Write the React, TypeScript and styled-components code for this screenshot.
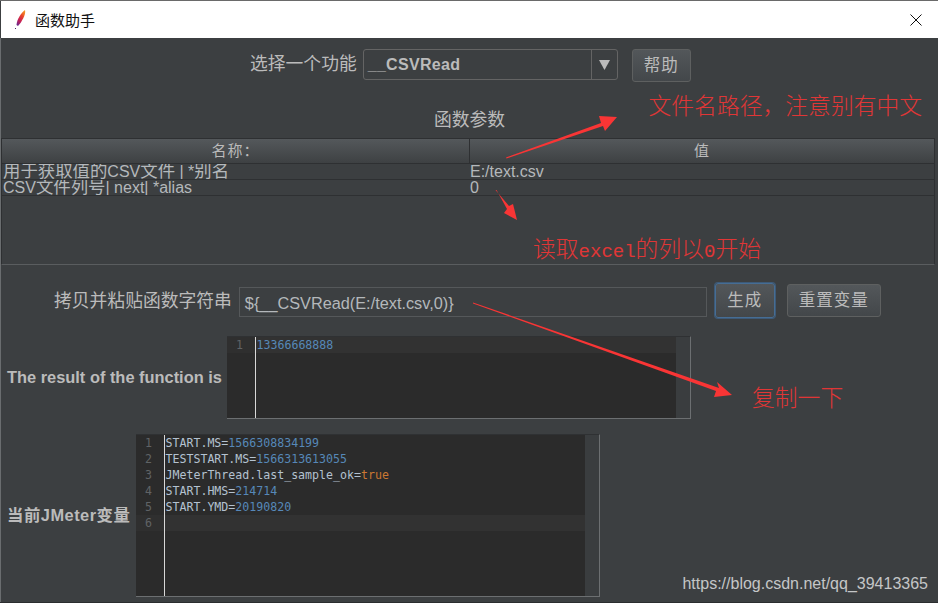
import React from 'react';
import styled, { createGlobalStyle } from 'styled-components';

type Token = { text: string; kind?: 'num' | 'bool' };
type Line = Token[];

const resultLines: Line[] = [[{ text: '13366668888', kind: 'num' }]];

const variableLines: Line[] = [
  [{ text: 'START.MS=' }, { text: '1566308834199', kind: 'num' }],
  [{ text: 'TESTSTART.MS=' }, { text: '1566313613055', kind: 'num' }],
  [{ text: 'JMeterThread.last_sample_ok=' }, { text: 'true', kind: 'bool' }],
  [{ text: 'START.HMS=' }, { text: '214714', kind: 'num' }],
  [{ text: 'START.YMD=' }, { text: '20190820', kind: 'num' }],
  [],
];

const params = [
  { name: '用于获取值的CSV文件 | *别名', value: 'E:/text.csv' },
  { name: 'CSV文件列号| next| *alias', value: '0' },
];

// the table font draws chinese a bit larger than latin
function MixedText({ text }: { text: string }) {
  const parts = text.split(/([\u4e00-\u9fff]+)/);
  return (
    <>
      {parts.map((part, i) => (i % 2 === 1 ? <CjkRun key={i}>{part}</CjkRun> : part))}
    </>
  );
}

function Editor({ lines, activeLine, width, height }: { lines: Line[]; activeLine: number; width: number; height: number }) {
  return (
    <EditorBox $width={width} $height={height}>
      <EditorMain>
        <Gutter>
          {lines.map((_, i) => (
            <GutterNumber key={i} $active={i === activeLine}>{i + 1}</GutterNumber>
          ))}
        </Gutter>
        <Code>
          {lines.map((line, i) => (
            <CodeLine key={i} $active={i === activeLine}>
              {line.map((t, j) => (
                <Tok key={j} $kind={t.kind}>{t.text}</Tok>
              ))}
            </CodeLine>
          ))}
        </Code>
      </EditorMain>
      <ScrollTrack />
    </EditorBox>
  );
}

function App() {
  return (
    <Window>
      <GlobalStyle />
      <TitleBar>
        <svg width="12" height="20" viewBox="0 0 12 20">
          <defs>
            <linearGradient id="feather" x1="0.8" y1="0" x2="0.2" y2="1">
              <stop offset="0" stopColor="#f59a23" />
              <stop offset="0.35" stopColor="#e8432a" />
              <stop offset="0.7" stopColor="#c21f5b" />
              <stop offset="1" stopColor="#6b2a8c" />
            </linearGradient>
          </defs>
          <path d="M11 0 C12 4 9 9 6.5 13 L4 16 L2.5 15 C3 9 7 3 11 0 Z" fill="url(#feather)" />
          <rect x="1" y="18" width="1" height="1" fill="#4a2a6c" />
        </svg>
        <TitleText>函数助手</TitleText>
        <CloseIcon width="12" height="12" viewBox="0 0 12 12">
          <path d="M0.5 0.5 L11.5 11.5 M11.5 0.5 L0.5 11.5" stroke="#111" strokeWidth="1" fill="none" />
        </CloseIcon>
      </TitleBar>

      <Body>
        <FunctionRow>
          <FieldLabel>选择一个功能</FieldLabel>
          <Combo>
            <ComboValue>__CSVRead</ComboValue>
            <ComboArrow>
              <svg width="11" height="11" viewBox="0 0 11 11">
                <path d="M0 1 H11 L5.5 11 Z" fill="#bbbbbb" />
              </svg>
            </ComboArrow>
          </Combo>
          <ActionButton $width={59} $height={33}>帮助</ActionButton>
        </FunctionRow>

        <SectionTitle>函数参数</SectionTitle>

        <ParamTable>
          <HeaderRow>
            <HeaderCell>名称：</HeaderCell>
            <HeaderCell>值</HeaderCell>
          </HeaderRow>
          {params.map((p) => (
            <ParamRow key={p.name}>
              <ParamCell><MixedText text={p.name} /></ParamCell>
              <ParamCell>{p.value}</ParamCell>
            </ParamRow>
          ))}
        </ParamTable>

        <GenerateRow>
          <FieldLabel>拷贝并粘贴函数字符串</FieldLabel>
          <FunctionInput>{'${__CSVRead(E:/text.csv,0)}'}</FunctionInput>
          <ActionButton $width={60} $height={35} $focused>生成</ActionButton>
          <ResetButton $width={94} $height={33}>重置变量</ResetButton>
        </GenerateRow>

        <ResultRow>
          <EditorLabel $width={220}>The result of the function is</EditorLabel>
          <Editor lines={resultLines} activeLine={0} width={464} height={83} />
        </ResultRow>

        <VariablesRow>
          <EditorLabel $width={129} $spacing={0.5} $lift={3}>当前JMeter变量</EditorLabel>
          <Editor lines={variableLines} activeLine={5} width={464} height={163} />
        </VariablesRow>
      </Body>

      {/* annotations drawn on top of the screenshot */}
      <ArrowLayer width="938" height="603" viewBox="0 0 938 603">
        <polygon points="506,157.5 601,123 599,116 617,117 605,131 603,126 506.5,158.5" fill="#f93535" />
        <polygon points="495.5,190 509,206 513,204 517,220 504,213 507,209 496.5,190" fill="#f93535" />
        <polygon points="473,302.5 719,388 717,382 732,395 714,397 716,391 473,303.5" fill="#f93535" />
      </ArrowLayer>
      <Note $left={648.5} $top={90}>文件名路径，注意别有中文</Note>
      <Note $left={533} $top={233}>读取<NoteLatin>excel</NoteLatin>的列以<NoteLatin>0</NoteLatin>开始</Note>
      <Note $left={752} $top={382}>复制一下</Note>
      <Watermark>https://blog.csdn.net/qq_39413365</Watermark>
    </Window>
  );
}

const GlobalStyle = createGlobalStyle`
  html, body {
    margin: 0;
    padding: 0;
    background: #3c3f41;
  }
`;

const Window = styled.div`
  position: relative;
  width: 938px;
  height: 603px;
  overflow: hidden;
  display: flex;
  flex-direction: column;
  box-sizing: border-box;
  background: #3c3f41;
  border-top: 1px solid #6a6a6a;
  border-bottom: 1px solid #2b2d2f;
  font-family: "Liberation Sans", "Noto Sans CJK SC", sans-serif;
`;

const TitleBar = styled.div`
  height: 37px;
  margin-left: 1px;
  padding-left: 13px;
  display: flex;
  align-items: center;
  background: #ffffff;
`;

const TitleText = styled.span`
  margin-left: 9px;
  font-size: 15px;
  color: #111111;
`;

const CloseIcon = styled.svg`
  margin-left: auto;
  margin-right: 16px;
`;

const Body = styled.div`
  flex: 1;
  display: flex;
  flex-direction: column;
  border-left: 1px solid #6a6d6f;
`;

const FunctionRow = styled.div`
  height: 33px;
  margin-top: 11px;
  padding-left: 249px;
  display: flex;
  align-items: flex-start;
`;

const FieldLabel = styled.label`
  font-size: 17.8px;
  line-height: 30px;
  color: #bbbbbb;
  white-space: nowrap;
`;

const Combo = styled.div`
  width: 255px;
  height: 31px;
  margin: 0 14px 0 6px;
  box-sizing: border-box;
  display: flex;
  border: 1px solid #646464;
  border-radius: 3px;
`;

const ComboValue = styled.span`
  flex: 1;
  padding-left: 4px;
  font-size: 16px;
  font-weight: 700;
  line-height: 29px;
  letter-spacing: 0.3px;
  color: #bbbbbb;
`;

const ComboArrow = styled.span`
  width: 25px;
  display: flex;
  align-items: center;
  justify-content: center;
  border-left: 1px solid #646464;
`;

const ActionButton = styled.button<{ $width: number; $height: number; $focused?: boolean }>`
  width: ${(p) => p.$width}px;
  height: ${(p) => p.$height}px;
  padding: 0 0 3px;
  box-sizing: border-box;
  font-family: inherit;
  font-size: 16.5px;
  letter-spacing: 1px;
  color: #bbbbbb;
  background: linear-gradient(#53575a, #43474a);
  border: 1px solid ${(p) => (p.$focused ? '#466d94' : '#5e6060')};
  border-radius: 3px;
  box-shadow: ${(p) => (p.$focused ? '0 0 0 1px #3d5a78' : 'none')};
`;

const ResetButton = styled(ActionButton)`
  margin-left: 12px;
  align-self: center;
`;

const SectionTitle = styled.div`
  height: 30px;
  margin-top: 26px;
  text-align: center;
  font-size: 17.8px;
  line-height: 24px;
  color: #bbbbbb;
`;

const ParamTable = styled.div`
  width: 934px;
  height: 127px;
  box-sizing: border-box;
  flex: none;
  border: 1px solid #2e3032;
  border-bottom-color: #5a5d5f;
`;

const HeaderRow = styled.div`
  height: 24px;
  display: grid;
  grid-template-columns: 467px 1fr;
  border-bottom: 1px solid #2e3032;
  background: linear-gradient(#54585b, #3e4143);
`;

const HeaderCell = styled.div`
  text-align: center;
  font-size: 15px;
  letter-spacing: 1px;
  line-height: 23px;
  color: #bbbbbb;
  & + & {
    border-left: 1px solid #2e3032;
  }
`;

const ParamRow = styled.div`
  height: 16px;
  display: grid;
  grid-template-columns: 467px 1fr;
  border-bottom: 1px solid #2e3032;
  box-sizing: border-box;
`;

const ParamCell = styled.div`
  padding-left: 1px;
  overflow: hidden;
  white-space: nowrap;
  font-size: 16px;
  line-height: 15px;
  color: #b4b8bb;
`;

const CjkRun = styled.span`
  font-size: 17.4px;
`;

const GenerateRow = styled.div`
  height: 35px;
  margin-top: 18px;
  padding-left: 53px;
  display: flex;
  align-items: center;
`;

const FunctionInput = styled.div`
  width: 468px;
  height: 30px;
  margin: 2px 8px 0 7px;
  padding-left: 5px;
  box-sizing: border-box;
  border: 1px solid #55585a;
  font-size: 16.3px;
  line-height: 30px;
  color: #b4b8bb;
`;

const ResultRow = styled.div`
  margin-top: 18px;
  padding-left: 6px;
  display: flex;
  align-items: center;
`;

const VariablesRow = styled(ResultRow)`
  margin-top: 15px;
`;

const EditorLabel = styled.div<{ $width: number; $spacing?: number; $lift?: number }>`
  width: ${(p) => p.$width}px;
  padding-bottom: ${(p) => p.$lift ?? 0}px;
  font-size: 16.4px;
  font-weight: 700;
  letter-spacing: ${(p) => p.$spacing ?? 0}px;
  color: #bbbbbb;
  white-space: nowrap;
`;

const EditorBox = styled.div<{ $width: number; $height: number }>`
  width: ${(p) => p.$width}px;
  height: ${(p) => p.$height}px;
  box-sizing: border-box;
  display: flex;
  background: #2b2b2b;
  border-top: 1px solid #2f3133;
  border-right: 1px solid #6c6f71;
  border-bottom: 1px solid #6c6f71;
`;

const EditorMain = styled.div`
  flex: 1;
  display: flex;
  font-family: "DejaVu Sans Mono", monospace;
  font-size: 11.6px;
  line-height: 16px;
`;

const Gutter = styled.div`
  width: 29px;
  flex: none;
  box-sizing: border-box;
  padding-left: 9px;
  border-right: 1px solid #d8d8d8;
  color: #606366;
`;

const GutterNumber = styled.div<{ $active: boolean }>`
  height: 16px;
  background: ${(p) => (p.$active ? '#2f2f2f' : 'transparent')};
  margin-left: -9px;
  padding-left: 9px;
`;

const Code = styled.div`
  flex: 1;
`;

const CodeLine = styled.div<{ $active: boolean }>`
  height: 16px;
  padding-left: 0.5px;
  white-space: pre;
  color: #b4c2d0;
  background: ${(p) => (p.$active ? '#323232' : 'transparent')};
`;

const Tok = styled.span<{ $kind?: 'num' | 'bool' }>`
  color: ${(p) => (p.$kind === 'num' ? '#5688b8' : p.$kind === 'bool' ? '#cc7832' : 'inherit')};
`;

const ScrollTrack = styled.div`
  width: 14px;
  flex: none;
  background: #3a3d3f;
`;

const ArrowLayer = styled.svg`
  position: absolute;
  left: 0;
  top: -1px;
  pointer-events: none;
`;

const Note = styled.div<{ $left: number; $top: number }>`
  position: absolute;
  left: ${(p) => p.$left}px;
  top: ${(p) => p.$top}px;
  font-family: "Noto Sans CJK SC", sans-serif;
  font-size: 22.8px;
  line-height: 28px;
  font-weight: 300;
  color: #e03636;
  white-space: nowrap;
`;

const NoteLatin = styled.span`
  font-family: "Liberation Mono", monospace;
  font-size: 19px;
`;

const Watermark = styled.div`
  position: absolute;
  right: 10px;
  bottom: 9px;
  font-size: 16px;
  line-height: 18px;
  color: #c4c6c7;
`;

export default App;
